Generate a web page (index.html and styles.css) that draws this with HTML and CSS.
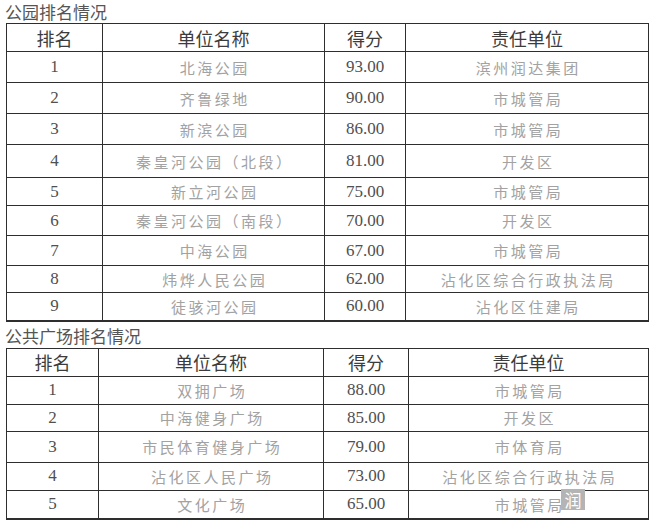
FILE: index.html
```html
<!DOCTYPE html>
<html lang="zh">
<head>
<meta charset="utf-8">
<link rel="stylesheet" href="styles.css">
</head>
<body>
<div class="page">
  <div class="title t1">公园排名情况</div>
  <table class="rank park">
    <colgroup><col class="c1"><col class="c2"><col class="c3"><col class="c4"></colgroup>
    <thead>
      <tr><th>排名</th><th>单位名称</th><th>得分</th><th>责任单位</th></tr>
    </thead>
    <tbody>
      <tr><td class="num">1</td><td class="cn">北海公园</td><td class="num">93.00</td><td class="cn">滨州润达集团</td></tr>
      <tr><td class="num">2</td><td class="cn">齐鲁绿地</td><td class="num">90.00</td><td class="cn">市城管局</td></tr>
      <tr><td class="num">3</td><td class="cn">新滨公园</td><td class="num">86.00</td><td class="cn">市城管局</td></tr>
      <tr><td class="num">4</td><td class="cn">秦皇河公园（北段）</td><td class="num">81.00</td><td class="cn">开发区</td></tr>
      <tr><td class="num">5</td><td class="cn">新立河公园</td><td class="num">75.00</td><td class="cn">市城管局</td></tr>
      <tr><td class="num">6</td><td class="cn">秦皇河公园（南段）</td><td class="num">70.00</td><td class="cn">开发区</td></tr>
      <tr><td class="num">7</td><td class="cn">中海公园</td><td class="num">67.00</td><td class="cn">市城管局</td></tr>
      <tr><td class="num">8</td><td class="cn">炜烨人民公园</td><td class="num">62.00</td><td class="cn">沾化区综合行政执法局</td></tr>
      <tr><td class="num">9</td><td class="cn">徒骇河公园</td><td class="num">60.00</td><td class="cn">沾化区住建局</td></tr>
    </tbody>
  </table>
  <div class="title t2">公共广场排名情况</div>
  <table class="rank square">
    <colgroup><col class="c1"><col class="c2"><col class="c3"><col class="c4"></colgroup>
    <thead>
      <tr><th>排名</th><th>单位名称</th><th>得分</th><th>责任单位</th></tr>
    </thead>
    <tbody>
      <tr><td class="num">1</td><td class="cn">双拥广场</td><td class="num">88.00</td><td class="cn">市城管局</td></tr>
      <tr><td class="num">2</td><td class="cn">中海健身广场</td><td class="num">85.00</td><td class="cn">开发区</td></tr>
      <tr><td class="num">3</td><td class="cn">市民体育健身广场</td><td class="num">79.00</td><td class="cn">市体育局</td></tr>
      <tr><td class="num">4</td><td class="cn">沾化区人民广场</td><td class="num">73.00</td><td class="cn">沾化区综合行政执法局</td></tr>
      <tr><td class="num">5</td><td class="cn">文化广场</td><td class="num">65.00</td><td class="cn">市城管局</td></tr>
    </tbody>
  </table>
  <div class="mark">润</div>
</div>
</body>
</html>
```

FILE: styles.css
```css
html, body {
  margin: 0;
  padding: 0;
  background: #ffffff;
}

.page {
  position: relative;
  width: 660px;
  height: 527px;
  padding: 0 0 0 6px;
  box-sizing: border-box;
  font-family: "Noto Sans CJK SC", "Noto Sans", sans-serif;
}

.title {
  font-size: 17px;
  color: #555555;
  margin-left: -1px;
}

.t1 {
  height: 23px;
  line-height: 23px;
}

.t2 {
  height: 26px;
  line-height: 24px;
  padding-top: 2px;
  box-sizing: border-box;
}

.rank {
  border-collapse: collapse;
  table-layout: fixed;
  width: 642px;
  border: 1px solid #2e2e2e;
  border-bottom: 2px solid #2e2e2e;
}

.rank th,
.rank td {
  border: 1px solid #2e2e2e;
  padding: 0;
  text-align: center;
  vertical-align: middle;
  white-space: nowrap;
  overflow: hidden;
}

.rank th {
  font-weight: normal;
  font-size: 18px;
  color: #3c3c3c;
  line-height: 20px;
}

.rank td.num {
  font-family: "Liberation Serif", "Times New Roman", serif;
  font-size: 17px;
  color: #505050;
}

.rank td.cn {
  font-family: "Noto Sans CJK SC", sans-serif;
  font-size: 15px;
  letter-spacing: 2.5px;
  color: #a2a2a2;
  text-indent: 2.5px;
}

.park .c1 { width: 96px; }
.park .c2 { width: 222px; }
.park .c3 { width: 81px; }
.park .c4 { width: 243px; }

.square .c1 { width: 92px; }
.square .c2 { width: 225px; }
.square .c3 { width: 85px; }
.square .c4 { width: 240px; }

.park thead tr { height: 28px; }
.park tbody tr:nth-child(1) { height: 31px; }
.park tbody tr:nth-child(2) { height: 31px; }
.park tbody tr:nth-child(3) { height: 31px; }
.park tbody tr:nth-child(4) { height: 33px; }
.park tbody tr:nth-child(5) { height: 28px; }
.park tbody tr:nth-child(6) { height: 30px; }
.park tbody tr:nth-child(7) { height: 30px; }
.park tbody tr:nth-child(8) { height: 27px; }
.park tbody tr:nth-child(9) { height: 28px; }

.square thead tr { height: 28px; }
.square tbody tr:nth-child(1) { height: 28px; }
.square tbody tr:nth-child(2) { height: 27px; }
.square tbody tr:nth-child(3) { height: 31px; }
.square tbody tr:nth-child(4) { height: 28px; }
.square tbody tr:nth-child(5) { height: 29px; }

.mark {
  position: absolute;
  left: 561px;
  top: 489px;
  width: 24px;
  height: 21px;
  background: #b4b4b4;
  color: #ffffff;
  font-size: 17px;
  line-height: 21px;
  text-align: center;
}
```
